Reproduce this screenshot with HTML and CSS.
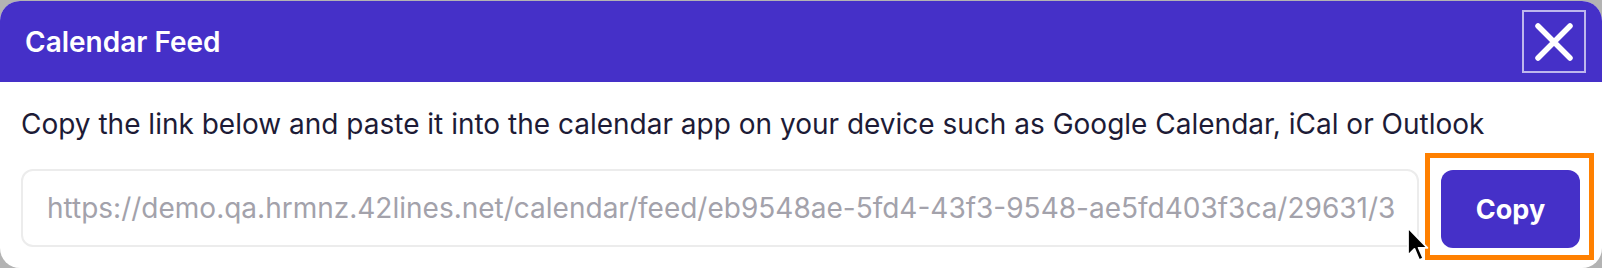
FILE: index.html
```html
<!DOCTYPE html>
<html lang="en">
<head>
<meta charset="utf-8">
<title>Calendar Feed</title>
<link rel="stylesheet" href="styles.css">
</head>
<body>
<div class="modal">
  <header class="modal-header">
    <h2 class="modal-title">Calendar Feed</h2>
    <button class="close-btn" aria-label="Close">
      <svg width="38" height="38" viewBox="0 0 38 38" aria-hidden="true">
        <path d="M3 3 L35 35 M35 3 L3 35" stroke="#fff" stroke-width="5.5" stroke-linecap="round" fill="none"/>
      </svg>
    </button>
  </header>
  <div class="modal-body">
    <p class="desc">Copy the link below and paste it into the calendar app on your device such as Google Calendar, iCal or Outlook</p>
    <div class="row">
      <div class="field">https://demo.qa.hrmnz.42lines.net/calendar/feed/eb9548ae-5fd4-43f3-9548-ae5fd403f3ca/29631/3</div>
      <div class="focus-ring">
        <button class="copy-btn">Copy</button>
      </div>
      <svg class="cursor" width="24" height="40" viewBox="0 0 20 34" aria-hidden="true">
        <path d="M1.5 1.5 L1.5 25 L7 19.5 L11 29 L14.5 27.5 L10.5 18.5 L18 18.5 Z" fill="#000" stroke="#fff" stroke-width="1.5" stroke-linejoin="round"/>
      </svg>
    </div>
  </div>
</div>
</body>
</html>
```

FILE: styles.css
```css
* { box-sizing: border-box; }
html, body { margin: 0; padding: 0; }
body {
  background: #b3b3b3;
  font-family: Inter, "Noto Sans", sans-serif;
  width: 1602px;
  height: 268px;
  overflow: hidden;
  padding-top: 1px;
}
.modal {
  background: #fff;
  border-radius: 20px;
  height: 267px;
  overflow: hidden;
}
.modal-header {
  background: #4530c8;
  height: 81px;
  display: flex;
  align-items: center;
  justify-content: space-between;
  padding: 0 16px 0 25px;
}
.modal-title {
  margin: 0;
  color: #fff;
  font-size: 28px;
  font-weight: 600;
  letter-spacing: 0;
}
.close-btn {
  width: 64px;
  height: 63px;
  border: 2px solid rgba(255, 255, 255, 0.65);
  background: transparent;
  padding: 0;
  display: flex;
  align-items: center;
  justify-content: center;
}
.modal-body {
  padding: 26px 7px 0 21px;
}
.desc {
  margin: 0;
  color: #1d1b36;
  font-size: 28px;
  line-height: 32px;
}
.row {
  position: relative;
  display: flex;
  align-items: center;
  margin-top: 11px;
}
.field {
  width: 1398px;
  height: 78px;
  margin-top: 4px;
  border: 2px solid #ececec;
  border-radius: 12px;
  padding: 0 24px;
  display: flex;
  align-items: center;
  color: #a3a2ab;
  font-size: 28px;
  white-space: nowrap;
  overflow: hidden;
}
.focus-ring {
  margin-left: 6px;
  border: 5px solid #ff8000;
  padding: 12px 9px 7px 11px;
  margin-top: 2px;
}
.copy-btn {
  width: 139px;
  height: 78px;
  border: none;
  border-radius: 12px;
  background: #4530c8;
  color: #fff;
  font-family: Inter, "Noto Sans", sans-serif;
  font-size: 27px;
  font-weight: 700;
  display: block;
}
.cursor {
  position: absolute;
  left: 1385px;
  top: 75px;
}
```
